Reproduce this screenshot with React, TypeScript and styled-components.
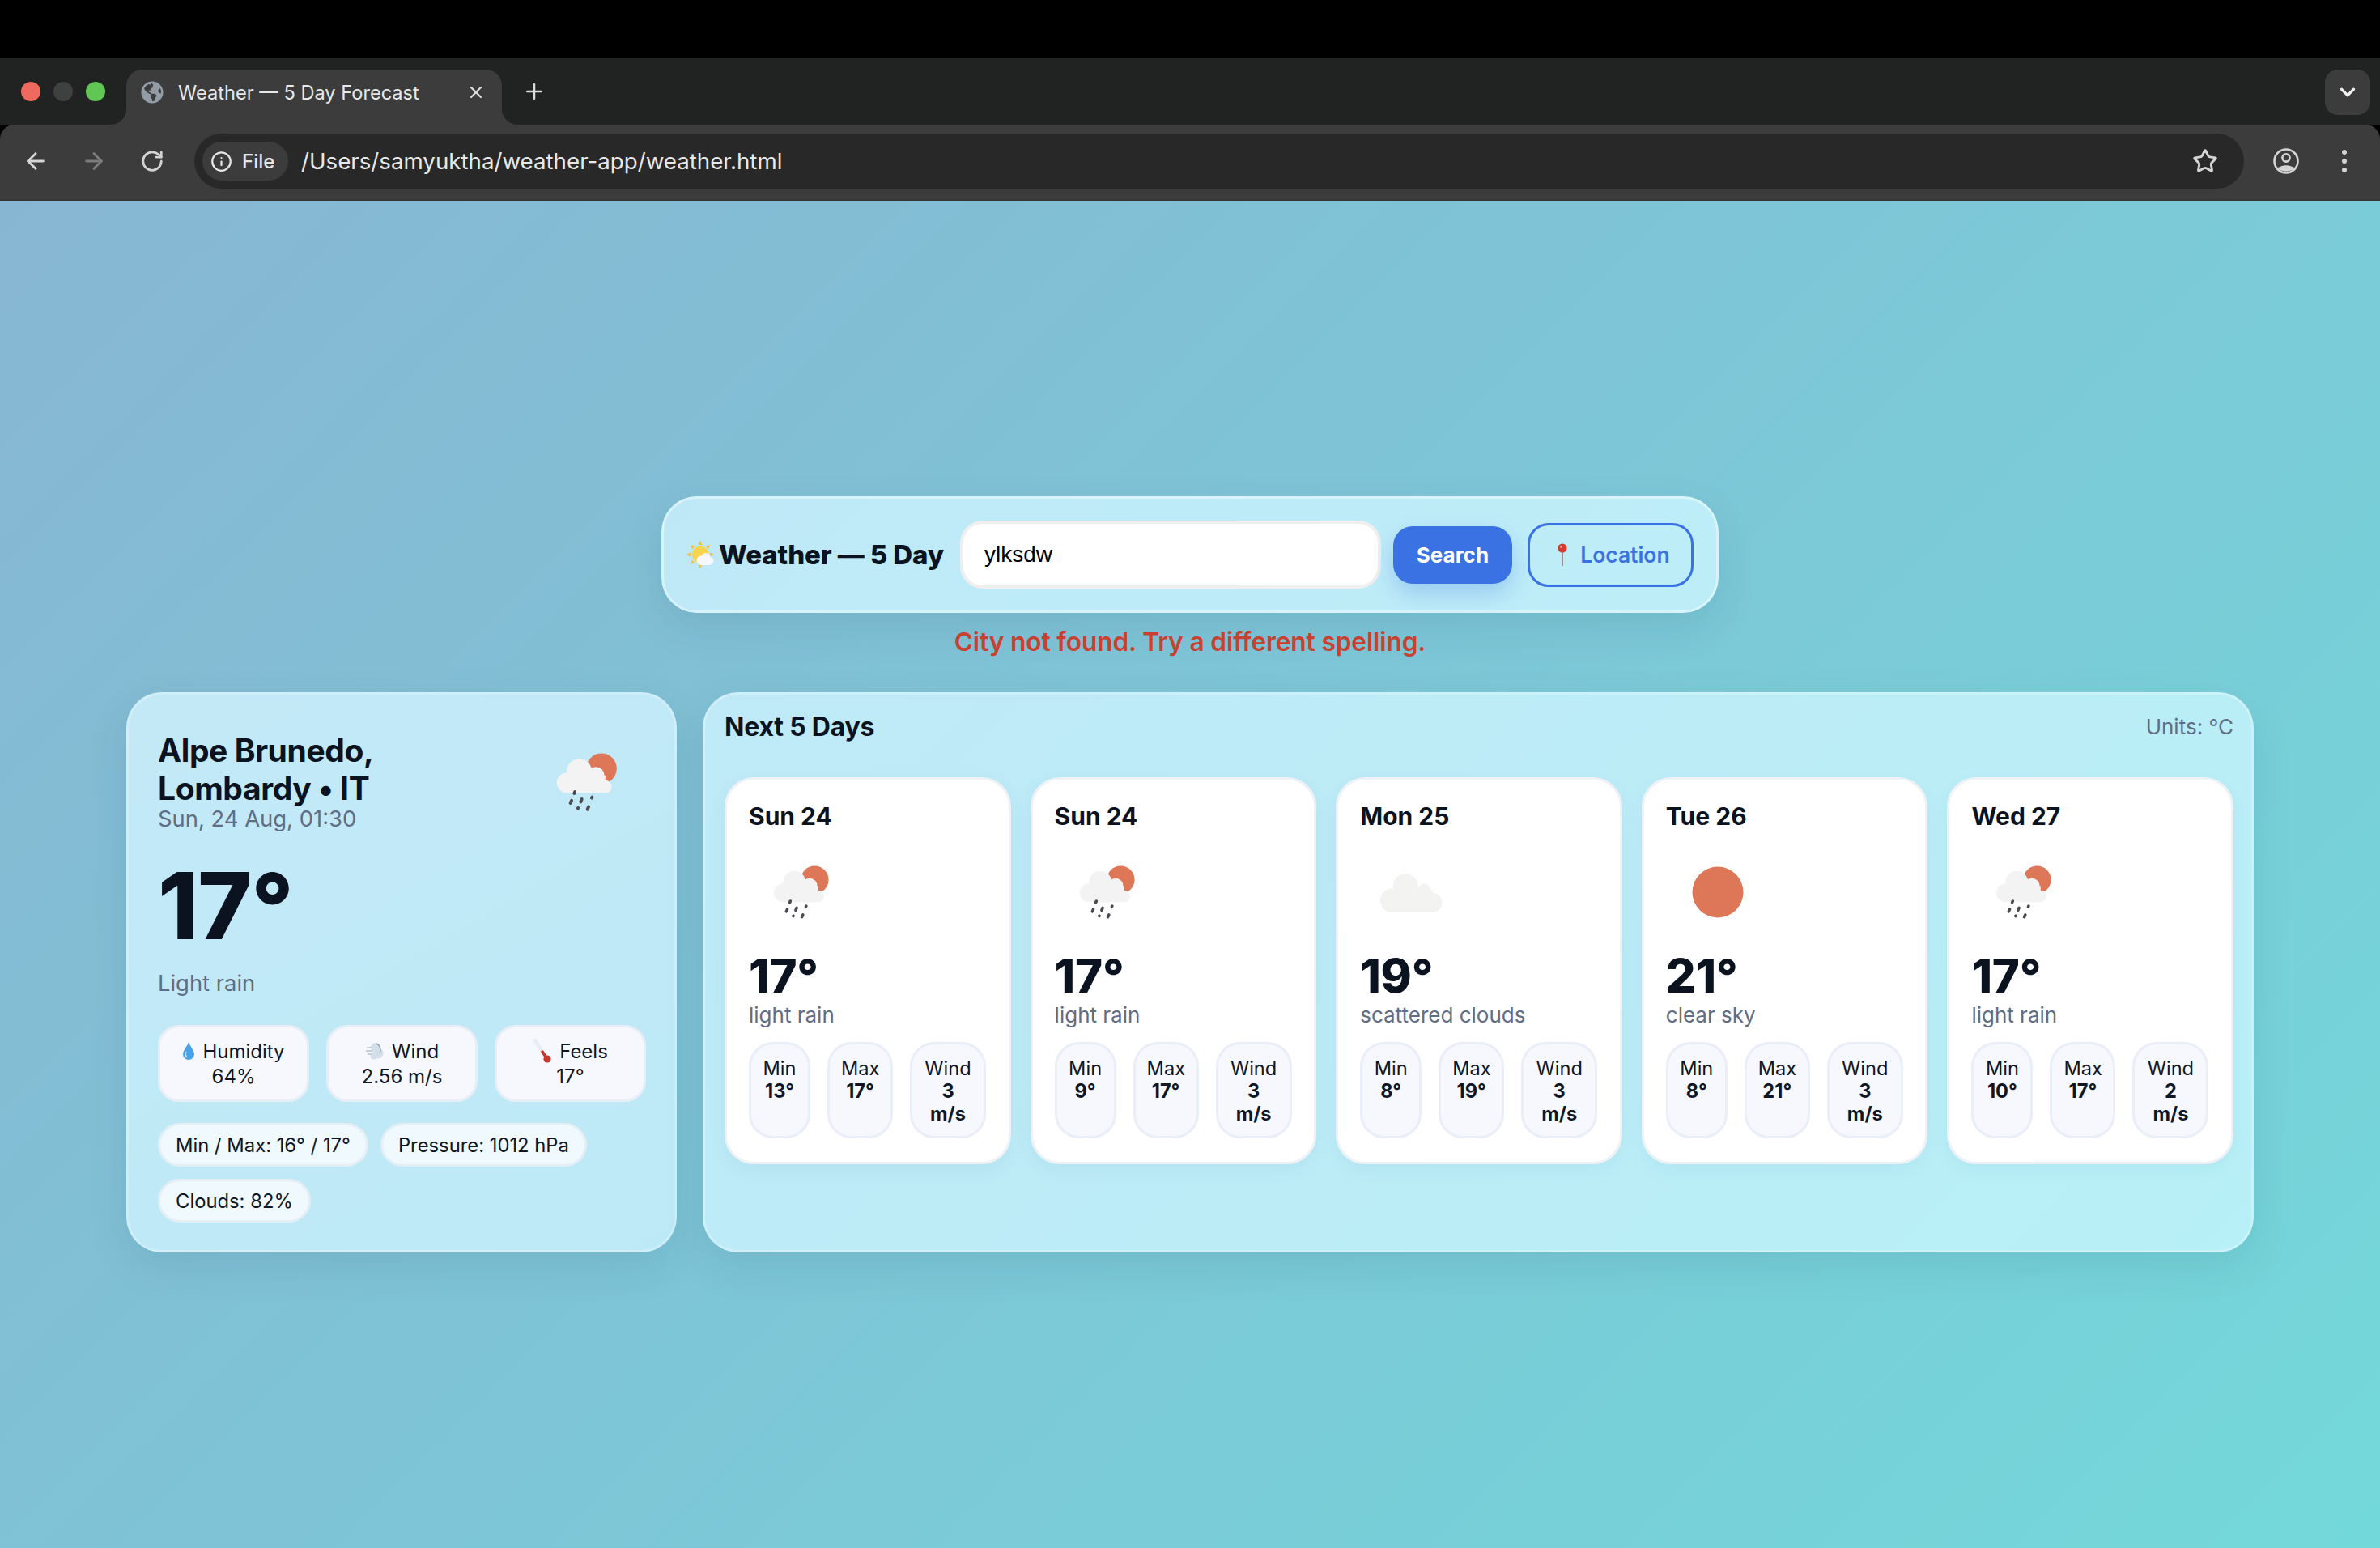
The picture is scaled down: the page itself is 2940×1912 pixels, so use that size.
import React from "react";
import styled, { createGlobalStyle } from "styled-components";
import { ArrowLeft, ArrowRight, RotateCw, Info, Star, X, Plus, ChevronDown } from "lucide-react";
import { FaGlobeAmericas } from "react-icons/fa";

const Global = createGlobalStyle`
  html, body { margin: 0; padding: 0; }
  body { font-family: Inter, "Noto Sans", sans-serif; background: #000; }
  * { box-sizing: border-box; }
`;

const Screen = styled.div`
  width: 2940px; height: 1912px; display: flex; flex-direction: column; overflow: hidden;
`;
const TopBlack = styled.div`height: 72px; background: #000; flex: none;`;
const TabStrip = styled.div`
  height: 82px; flex: none; background: #202322; display: flex; align-items: flex-end; position: relative;
`;
const Lights = styled.div`
  width: 156px; height: 100%; display: flex; align-items: center; gap: 16px; padding: 0 0 0 26px; align-self: stretch;
  flex: none;
`;
const Light = styled.span<{ $c: string }>`
  width: 24px; height: 24px; border-radius: 50%; background: ${p => p.$c}; flex: none; margin-bottom: 0;
`;
const Tab = styled.div`
  width: 464px; height: 68px; background: #3c3c3c; border-radius: 20px 20px 0 0; position: relative;
  display: flex; align-items: center; padding: 0 20px 12px 18px; color: #e6e8e9; font-size: 23.6px; flex: none;
  &::before, &::after { content: ""; position: absolute; bottom: 0; width: 20px; height: 20px; }
  &::before { left: -20px; background: radial-gradient(circle at 0 0, #202322 20px, #3c3c3c 20.5px); }
  &::after { right: -20px; background: radial-gradient(circle at 100% 0, #202322 20px, #3c3c3c 20.5px); }
`;
const TabTitle = styled.span`margin-left: 18px; flex: 1; white-space: nowrap;`;
const PlusWrap = styled.div`
  width: 40px; height: 68px; margin-left: 20px; display: flex; align-items: center; justify-content: center; color: #dcdcdc; padding-bottom: 14px;
`;
const Spacer = styled.div`flex: 1;`;
const TabMenu = styled.div`
  width: 56px; height: 56px; margin: 0 12px 12px 0; border-radius: 16px; background: #3c3c3c; color: #f0f0f0;
  display: flex; align-items: center; justify-content: center;
`;
const Toolbar = styled.div`
  height: 94px; flex: none; background: #3c3c3c; border-radius: 18px 18px 0 0; display: flex; align-items: center;
  padding: 0 8px 2px 8px; border-bottom: 2px solid #363636;
`;
const NavBtn = styled.div<{ $dim?: boolean }>`
  width: 72px; height: 68px; display: flex; align-items: center; justify-content: center; flex: none;
  color: ${p => (p.$dim ? "#7c7c7c" : "#d4d4d4")};
`;
const AddressBar = styled.div`
  flex: 1; height: 68px; margin: 0 16px; background: #282828; border-radius: 34px; display: flex; align-items: center; padding: 0 32px 0 10px;
`;
const FileChip = styled.div`
  height: 48px; width: 106px; border-radius: 24px; background: #3c3c3c; color: #e6e6e6; display: flex; align-items: center;
  padding-left: 10px; gap: 12px; font-size: 24px; font-weight: 500; flex: none;
`;
const Url = styled.div`margin-left: 16px; color: #e8e8e8; font-size: 27.7px; flex: 1; white-space: nowrap;`;

const Page = styled.main`
  flex: 1; display: flex; flex-direction: column; align-items: stretch; justify-content: center; padding: 0 156px;
  background: linear-gradient(135deg, #87b6d2 0%, #7dc6d7 50%, #73d8da 100%);
`;
const Header = styled.header`
  width: 1306px; height: 144px; align-self: center; border-radius: 44px; display: flex; align-items: center; padding: 0 27px 0 27px;
  background: linear-gradient(135deg, #bfe8f7, #bdeef8);
  border: 3px solid rgba(255,255,255,.4);
  box-shadow: 0 18px 50px rgba(20,60,90,.1);
`;
const Brand = styled.h1`
  margin: 0; display: flex; align-items: center; gap: 5px; font-size: 33px; font-weight: 800; color: #0b1220; white-space: nowrap; letter-spacing: -.1px;
`;
const CityInput = styled.input`
  width: 520px; height: 84px; margin-left: 20px; border-radius: 28px; border: 4px solid #efefef; background: #fff; padding: 0 26px;
  font: 400 28px "Liberation Sans", Arial, sans-serif; color: #000; outline: none; flex: none;
`;
const SearchBtn = styled.button`
  width: 147px; height: 71px; margin-left: 15px; border: 0; border-radius: 24px; background: #3a72e3; color: #fff; font: 700 26px Inter, sans-serif;
  box-shadow: 0 12px 28px rgba(58,114,227,.28); flex: none; padding: 0;
`;
const LocationBtn = styled.button`
  width: 205px; height: 79px; margin-left: 19px; border: 3px solid #3a72e3; border-radius: 26px; background: transparent; color: #3a72e3;
  font: 600 26.4px Inter, sans-serif; display: flex; align-items: center; justify-content: center; gap: 13px; flex: none; padding: 0 0 0 5px;
`;
const ErrorText = styled.div`
  margin: 16px 0 42px; height: 40px; line-height: 40px; text-align: center; color: #c8402f; font-size: 31.6px; font-weight: 600; letter-spacing: -.1px;
`;
const Columns = styled.div`
  display: grid; grid-template-columns: 680px minmax(0, 1fr); gap: 32px; height: 692px;
`;
const Panel = styled.section`
  border-radius: 44px; border: 3px solid rgba(255,255,255,.25);
  box-shadow: 0 18px 50px rgba(20,60,90,.1);
`;
const LeftPanel = styled(Panel)`
  background: linear-gradient(150deg, #c3e9f7, #bde9f6);
  padding: 38px 36px 30px;
`;
const TopRow = styled.div`display: flex; justify-content: space-between; height: 140px;`;
const City = styled.h2`
  margin: 7px 0 0; font-size: 39px; line-height: 47px; font-weight: 700; color: #0b1220; letter-spacing: -.4px;
`;
const Stamp = styled.div`font-size: 27.4px; line-height: 33px; color: #5f6d85; margin-top: -2px;`;
const BigTemp = styled.div`
  font-size: 114px; line-height: 112px; font-weight: 800; color: #0b1220; margin-top: 27px; letter-spacing: -1px;
`;
const Summary = styled.div`font-size: 27.4px; line-height: 36px; color: #5f6d85; margin-top: 21px;`;
const StatRow = styled.div`display: grid; grid-template-columns: repeat(3, 187px); gap: 21px; margin-top: 34px;`;
const Stat = styled.div`
  height: 95px; border-radius: 26px; background: #f6f8fd; border: 3px solid #e8eef6; display: flex; flex-direction: column; align-items: center; justify-content: center;
  font-size: 24px; line-height: 31px; color: #0f1726;
`;
const StatLabel = styled.span`display: inline-flex; align-items: center; gap: 9px;`;
const Pills = styled.div`display: flex; flex-wrap: wrap; gap: 15px; margin-top: 26px;`;
const Pill = styled.div`
  height: 54px; border-radius: 27px; background: #eff9fe; border: 3px solid #e3eff5; display: flex; align-items: center; padding: 0 19px;
  font-size: 23.8px; color: #0f1726; white-space: nowrap;
`;
const RightPanel = styled(Panel)`
  background: linear-gradient(135deg, #bfe9f7, #b8f0f7);
  padding: 17px 22px 20px 24px;
`;
const PanelHead = styled.div`display: flex; justify-content: space-between; align-items: center; height: 44px;`;
const PanelTitle = styled.h3`margin: 0; font-size: 32px; font-weight: 700; color: #0b1220; letter-spacing: -.2px;`;
const Units = styled.div`font-size: 26px; color: #5f6d85;`;
const Days = styled.div`display: grid; grid-template-columns: repeat(5, minmax(0, 1fr)); gap: 24px; margin-top: 41px;`;
const DayCard = styled.article`
  height: 478px; background: #fff; border-radius: 36px; border: 3px solid #eef2f6; padding: 25px 27px;
  box-shadow: 0 8px 24px rgba(20,80,110,.05);
`;
const DayName = styled.div`font-size: 30px; line-height: 40px; font-weight: 700; color: #0b1220;`;
const DayIconBox = styled.div`width: 128px; height: 128px; margin-top: 10px;`;
const DayTemp = styled.div`font-size: 58px; line-height: 56px; font-weight: 800; color: #0b1220; margin-top: 11px; letter-spacing: -.2px;`;
const DayDesc = styled.div`font-size: 26px; line-height: 34px; color: #5f6d85; margin-top: 4px;`;
const Minis = styled.div`display: grid; grid-template-columns: 76px 81px 94px; gap: 21px; margin-top: 16px; height: 119px;`;
const Mini = styled.div`
  background: #f6f8fd; border: 3px solid #e9eef8; border-radius: 30px; padding: 16px 14px 0; text-align: center; font-size: 23.6px; line-height: 28px; color: #0f1726;
`;
const MiniVal = styled.div`font-weight: 700;`;
const Emoji = styled.svg`display: block; flex: none;`;
const IconSvg = styled.svg`display: block; width: 100%; height: 100%;`;
const BigIcon = styled.div`width: 140px; height: 140px; flex: none; margin-right: 3px;`;

const Sun = () => <circle cx="50" cy="50" r="24.6" fill="#de7757" />;

const RainIcon = () => (
  <IconSvg viewBox="0 0 100 100">
    <circle cx="63.6" cy="38" r="13.4" fill="#de7757" />
    <g fill="#f3f3f3">
      <circle cx="44" cy="40.5" r="11" />
      <circle cx="33" cy="50.6" r="8.9" />
      <circle cx="58.6" cy="44" r="7.4" />
      <circle cx="67" cy="54" r="5.6" />
      <rect x="33" y="44" width="34" height="15.5" />
    </g>
    <g stroke="#4b4c52" strokeWidth="2.8" strokeLinecap="round">
      <line x1="40.1" y1="58.6" x2="39.5" y2="60" />
      <line x1="37.2" y1="66.3" x2="36.2" y2="68.6" />
      <line x1="46.2" y1="65.1" x2="45.2" y2="67.4" />
      <line x1="55.4" y1="63.3" x2="55" y2="64" />
      <line x1="43" y1="72.8" x2="42.8" y2="73.1" />
      <line x1="52.2" y1="71.8" x2="51.2" y2="74" />
    </g>
  </IconSvg>
);
const CloudIcon = () => (
  <IconSvg viewBox="0 0 100 100">
    <g fill="#f3f3f1">
      <circle cx="31" cy="58" r="11.5" />
      <circle cx="44" cy="44" r="12" />
      <circle cx="62" cy="49" r="7" />
      <circle cx="70" cy="60" r="9.3" />
      <rect x="31" y="48" width="39" height="21.4" />
    </g>
  </IconSvg>
);
const SunIcon = () => (
  <IconSvg viewBox="0 0 100 100"><Sun /></IconSvg>
);
const icons = { rain: RainIcon, cloud: CloudIcon, sun: SunIcon };

const SunCloudEmoji = () => (
  <Emoji width="36" height="36" viewBox="0 0 36 36">
    <g fill="#f1bf42">
      <path d="M18 1l2.5 5h-5z" /><path d="M18 35l2.5-5h-5z" /><path d="M1 18l5-2.5v5z" /><path d="M35 18l-5-2.5v5z" />
      <path d="M6 6l5.3 1.8-3.5 3.5z" /><path d="M30 6l-5.3 1.8 3.5 3.5z" /><path d="M6 30l1.8-5.3 3.5 3.5z" /><path d="M30 30l-1.8-5.3-3.5 3.5z" />
    </g>
    <circle cx="18" cy="18" r="10.5" fill="#fcd34f" />
    <g fill="#f5f7fb">
      <circle cx="19" cy="25" r="5.5" /><circle cx="25" cy="22" r="6" /><circle cx="30" cy="26" r="4.5" />
      <rect x="16" y="24" width="16" height="7" rx="3.5" />
    </g>
  </Emoji>
);
const PinEmoji = () => (
  <Emoji width="18" height="30" viewBox="0 0 18 30">
    <rect x="8" y="11" width="2" height="18" fill="#9a8f8a" />
    <circle cx="9" cy="7" r="5.6" fill="#d8382f" />
    <circle cx="7.5" cy="5.4" r="1.5" fill="#f3a09a" />
  </Emoji>
);
const DropEmoji = () => (
  <Emoji width="16" height="24" viewBox="0 0 16 24">
    <path d="M8 1C6 7 1 11 1 16a7 7 0 0 0 14 0C15 11 10 7 8 1z" fill="#4aa3e8" />
    <path d="M5 13c-1 2-1 5 1 7" stroke="#bfe3fb" strokeWidth="1.6" fill="none" />
  </Emoji>
);
const WindEmoji = () => (
  <Emoji width="24" height="24" viewBox="0 0 24 24">
    <g fill="#d5dfea">
      <circle cx="13" cy="8" r="6" /><circle cx="16" cy="15" r="6.5" /><circle cx="11" cy="18" r="4.5" />
    </g>
    <path d="M14 3c5 2 6 8 4 12" stroke="#8fa6be" strokeWidth="1.5" fill="none" />
    <g stroke="#b4c3d3" strokeWidth="1.5"><line x1="2" y1="8" x2="8" y2="8" /><line x1="1" y1="12" x2="9" y2="12" /><line x1="3" y1="16" x2="8" y2="16" /></g>
  </Emoji>
);
const ThermoEmoji = () => (
  <Emoji width="24" height="30" viewBox="0 0 24 30">
    <line x1="3" y1="2" x2="17" y2="24" stroke="#e8eef3" strokeWidth="5" strokeLinecap="round" />
    <line x1="12" y1="16" x2="18" y2="25" stroke="#c8352c" strokeWidth="3.5" strokeLinecap="round" />
    <circle cx="18" cy="25" r="4.6" fill="#c8352c" />
  </Emoji>
);
const ProfileIcon = () => (
  <Emoji width="34" height="34" viewBox="0 0 34 34" fill="none">
    <circle cx="17" cy="17" r="14.5" stroke="#d4d4d4" strokeWidth="2.6" />
    <circle cx="17" cy="13" r="4.6" stroke="#d4d4d4" strokeWidth="2.6" />
    <path d="M7 26c4-5 16-5 20 0-5 5-15 5-20 0z" fill="#d4d4d4" />
  </Emoji>
);
const DotsIcon = () => (
  <Emoji width="8" height="32" viewBox="0 0 8 32" fill="#d4d4d4">
    <circle cx="4" cy="5" r="3" /><circle cx="4" cy="16" r="3" /><circle cx="4" cy="27" r="3" />
  </Emoji>
);

const days = [
  { name: "Sun 24", icon: "rain", temp: "17°", desc: "light rain", min: "13°", max: "17°", wind: "3 m/s" },
  { name: "Sun 24", icon: "rain", temp: "17°", desc: "light rain", min: "9°", max: "17°", wind: "3 m/s" },
  { name: "Mon 25", icon: "cloud", temp: "19°", desc: "scattered clouds", min: "8°", max: "19°", wind: "3 m/s" },
  { name: "Tue 26", icon: "sun", temp: "21°", desc: "clear sky", min: "8°", max: "21°", wind: "3 m/s" },
  { name: "Wed 27", icon: "rain", temp: "17°", desc: "light rain", min: "10°", max: "17°", wind: "2 m/s" },
] as const;

export default function App() {
  return (
    <Screen>
      <Global />
      <TopBlack />
      <TabStrip>
        <Lights>
          <Light $c="#f0695e" /><Light $c="#3e4140" /><Light $c="#60c755" />
        </Lights>
        <Tab>
          <FaGlobeAmericas size={28} color="#929da5" />
          <TabTitle>Weather — 5 Day Forecast</TabTitle>
          <X size={24} strokeWidth={2.2} color="#e0e0e0" />
        </Tab>
        <PlusWrap><Plus size={30} strokeWidth={2} /></PlusWrap>
        <Spacer />
        <TabMenu><ChevronDown size={30} strokeWidth={2.6} /></TabMenu>
      </TabStrip>
      <Toolbar>
        <NavBtn><ArrowLeft size={32} strokeWidth={2.2} /></NavBtn>
        <NavBtn $dim><ArrowRight size={32} strokeWidth={2.2} /></NavBtn>
        <NavBtn><RotateCw size={30} strokeWidth={2.2} /></NavBtn>
        <AddressBar>
          <FileChip><Info size={27} strokeWidth={2} />File</FileChip>
          <Url>/Users/samyuktha/weather-app/weather.html</Url>
          <Star size={32} strokeWidth={2.2} color="#d4d4d4" />
        </AddressBar>
        <NavBtn><ProfileIcon /></NavBtn>
        <NavBtn><DotsIcon /></NavBtn>
      </Toolbar>
      <Page>
        <Header>
          <Brand><SunCloudEmoji />Weather — 5 Day</Brand>
          <CityInput defaultValue="ylksdw" />
          <SearchBtn>Search</SearchBtn>
          <LocationBtn><PinEmoji />Location</LocationBtn>
        </Header>
        <ErrorText>City not found. Try a different spelling.</ErrorText>
        <Columns>
          <LeftPanel>
            <TopRow>
              <div>
                <City>Alpe Brunedo,<br />Lombardy • IT</City>
                <Stamp>Sun, 24 Aug, 01:30</Stamp>
              </div>
              <BigIcon><RainIcon /></BigIcon>
            </TopRow>
            <BigTemp>17°</BigTemp>
            <Summary>Light rain</Summary>
            <StatRow>
              <Stat><StatLabel><DropEmoji />Humidity</StatLabel><span>64%</span></Stat>
              <Stat><StatLabel><WindEmoji />Wind</StatLabel><span>2.56 m/s</span></Stat>
              <Stat><StatLabel><ThermoEmoji />Feels</StatLabel><span>17°</span></Stat>
            </StatRow>
            <Pills>
              <Pill>Min / Max: 16° / 17°</Pill>
              <Pill>Pressure: 1012 hPa</Pill>
              <Pill>Clouds: 82%</Pill>
            </Pills>
          </LeftPanel>
          <RightPanel>
            <PanelHead>
              <PanelTitle>Next 5 Days</PanelTitle>
              <Units>Units: °C</Units>
            </PanelHead>
            <Days>
              {days.map((d, i) => {
                const Ic = icons[d.icon];
                return (
                  <DayCard key={i}>
                    <DayName>{d.name}</DayName>
                    <DayIconBox><Ic /></DayIconBox>
                    <DayTemp>{d.temp}</DayTemp>
                    <DayDesc>{d.desc}</DayDesc>
                    <Minis>
                      <Mini>Min<MiniVal>{d.min}</MiniVal></Mini>
                      <Mini>Max<MiniVal>{d.max}</MiniVal></Mini>
                      <Mini>Wind<MiniVal>{d.wind}</MiniVal></Mini>
                    </Minis>
                  </DayCard>
                );
              })}
            </Days>
          </RightPanel>
        </Columns>
      </Page>
    </Screen>
  );
}
